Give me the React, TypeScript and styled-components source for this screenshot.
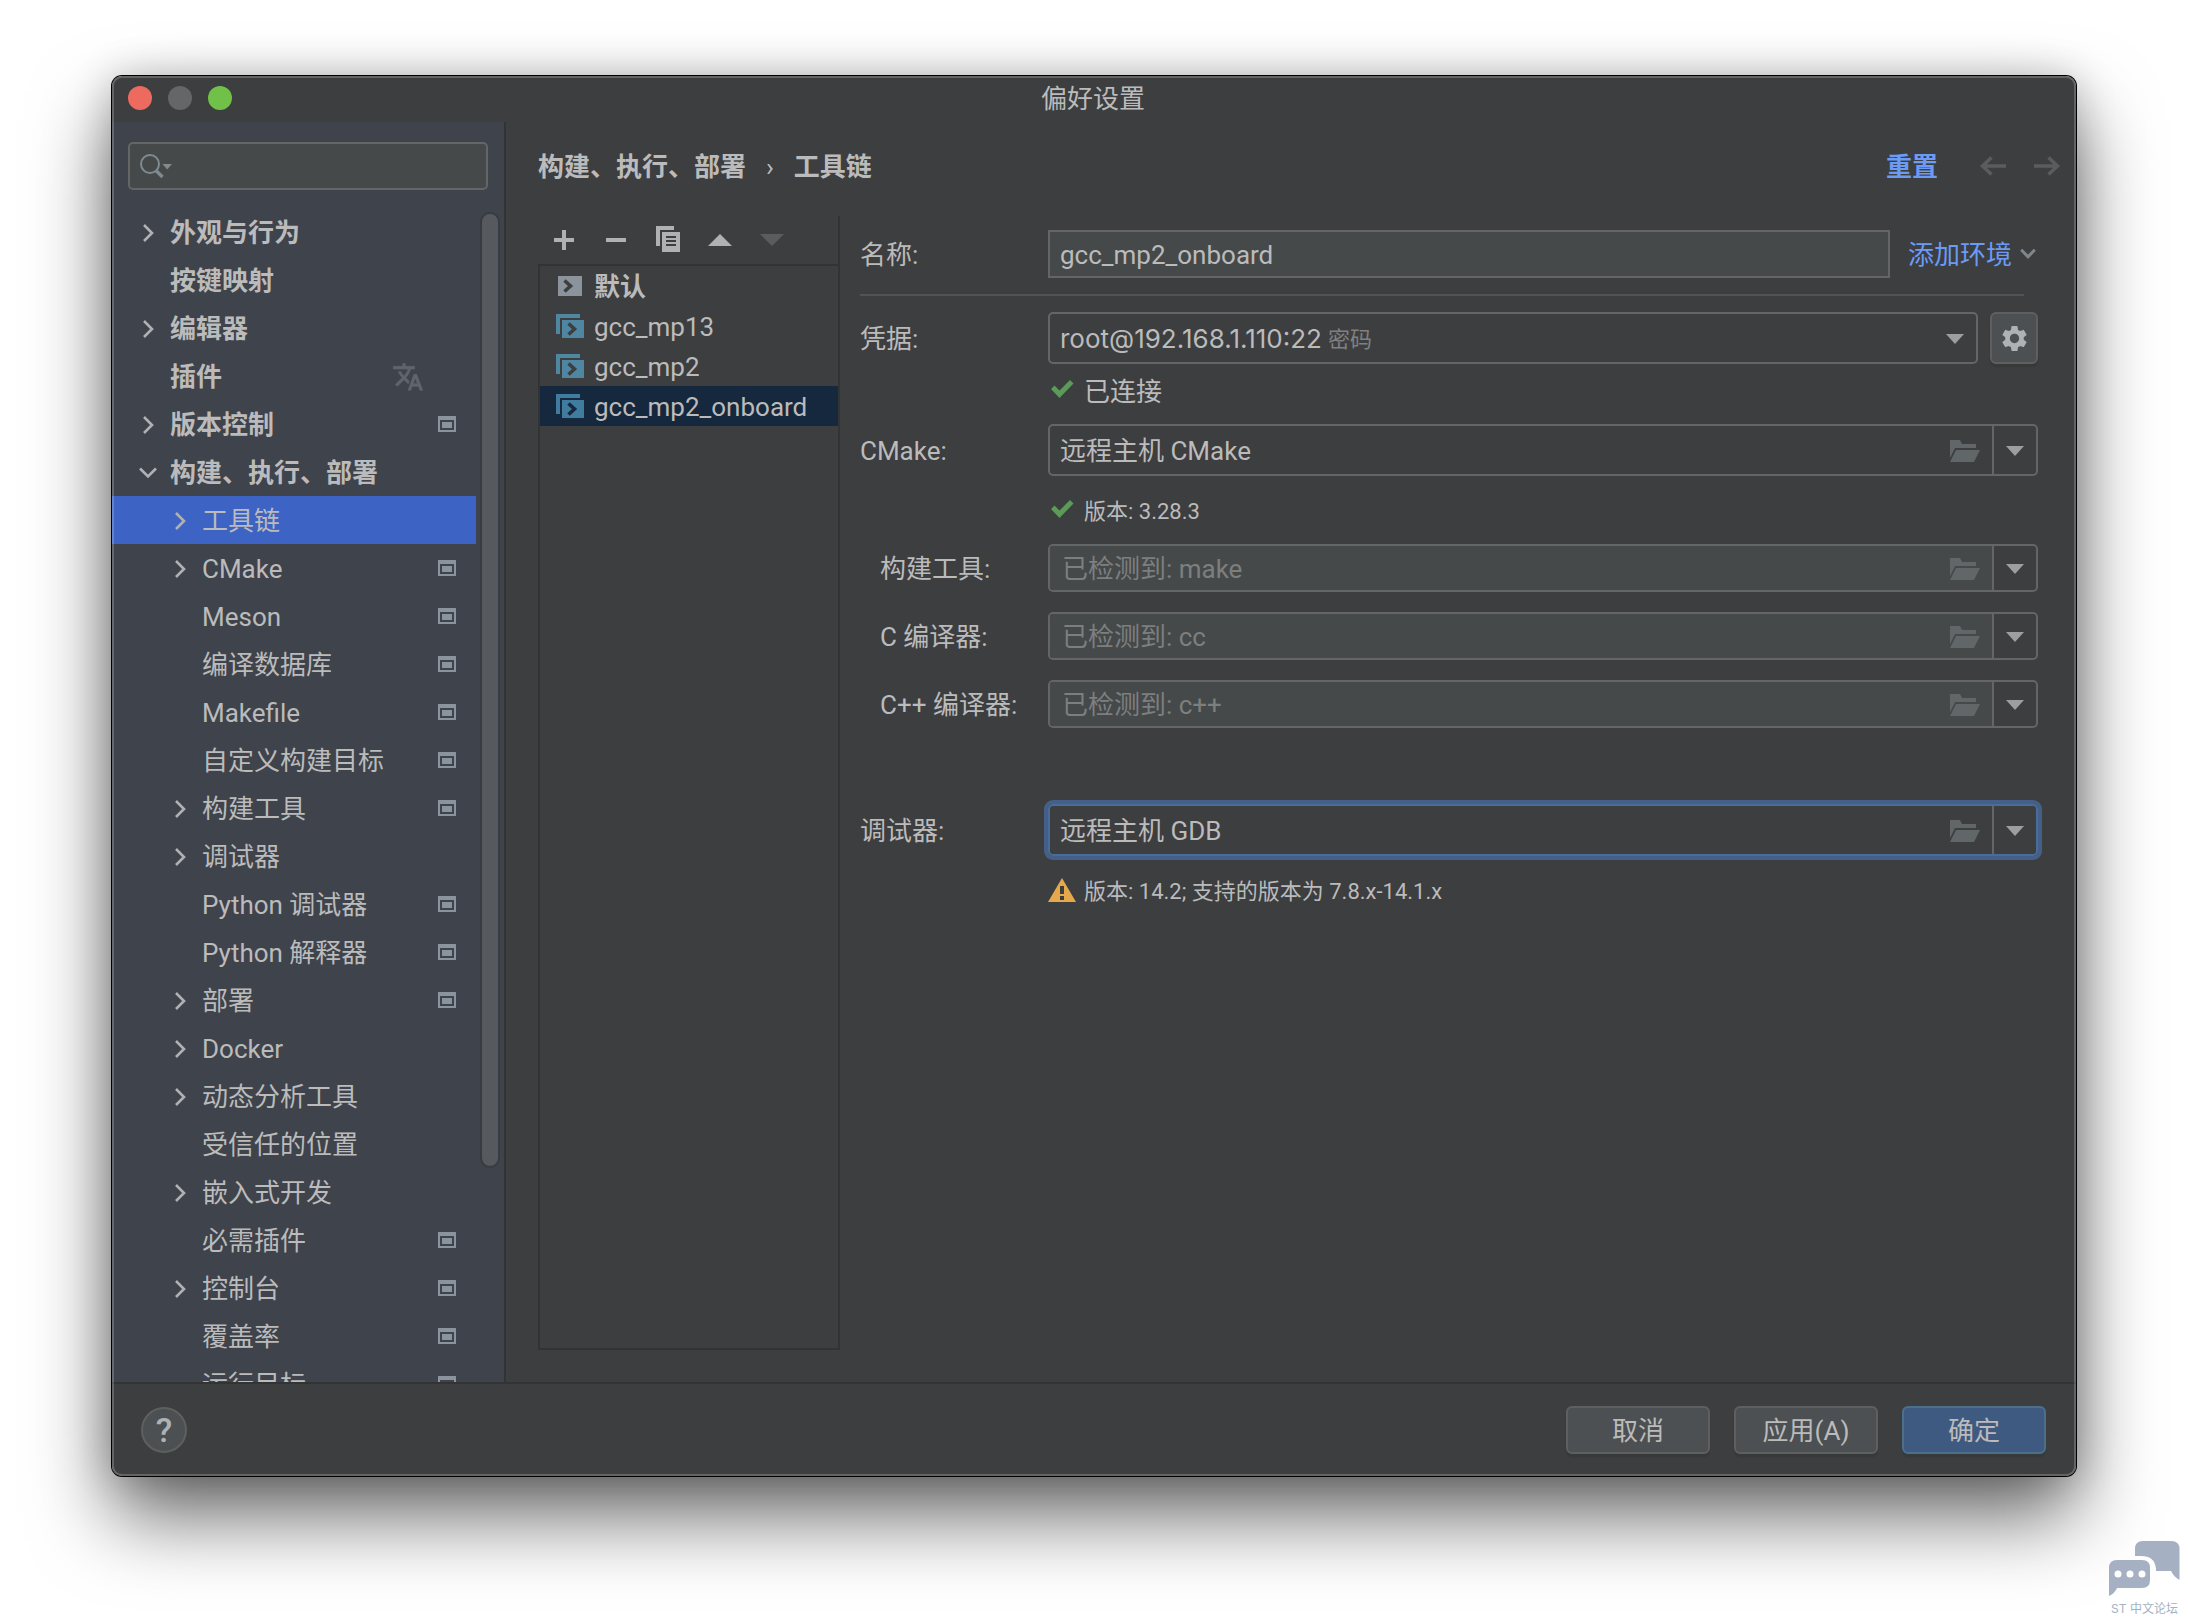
import React, { useState } from "react";
import styled, { createGlobalStyle, css } from "styled-components";
import { MdSettings } from "react-icons/md";

const color = {
  panel: "#3d3e40",
  sidebar: "#3f434c",
  field: "#45494a",
  line: "#323334",
  border: "#646566",
  text: "#bbbbbb",
  dim: "#808080",
  link: "#6b9bf5",
  selected: "#3d63c4",
  listSelected: "#16283d",
  glyph: "#afb1b3",
  disabled: "#5c5c5c",
  muted: "#8b949d",
};

/* Text sits a little below the middle of its row, so that CJK glyphs look centred. */
const textDrop = css`
  padding-top: 2px;
`;

const GlobalStyle = createGlobalStyle`
  *, *::before, *::after { box-sizing: border-box; }
  body { margin: 0; background: #ffffff; }
  body, button, input, select {
    font-family: Roboto, "Noto Sans CJK SC", sans-serif;
    font-size: 26px;
    line-height: 32px;
    color: ${color.text};
  }
  button, input, select {
    margin: 0;
    padding: 0;
    border: 0;
    border-radius: 0;
    background: none;
    outline: none;
    appearance: none;
  }
  svg { display: block; flex: none; }
`;

const Page = styled.div`
  display: flex;
  height: 100vh;
  padding: 76px 112px 148px;
  overflow: hidden;
`;

const Window = styled.div`
  position: relative;
  flex: 1;
  min-width: 0;
  display: flex;
  flex-direction: column;
  overflow: hidden;
  border-radius: 10px;
  background: ${color.panel};
`;

const WindowShadow = styled.div`
  flex: 1;
  min-width: 0;
  display: flex;
  border-radius: 10px;
  box-shadow: 0 0 0 1px #000000, 0 40px 80px rgba(0, 0, 0, 0.6), 0 0 40px rgba(0, 0, 0, 0.2);
`;

const Rim = styled.div`
  position: absolute;
  inset: 0;
  border: 2px solid rgba(255, 255, 255, 0.2);
  border-radius: 10px;
  pointer-events: none;
`;

const TitleBar = styled.header`
  flex: none;
  display: grid;
  grid-template-columns: 1fr auto 1fr;
  align-items: center;
  height: 46px;
  padding: 0 18px 2px 16px;
`;

const TrafficLights = styled.div`
  display: flex;
  gap: 16px;
`;

const Light = styled.button<{ $color: string }>`
  width: 24px;
  height: 24px;
  border-radius: 50%;
  background: ${(p) => p.$color};
`;

const Title = styled.h1`
  margin: 0;
  font-size: 26px;
  font-weight: 400;
  ${textDrop}
`;

const Main = styled.div`
  flex: 1;
  min-height: 0;
  display: flex;
  border-bottom: 2px solid ${color.line};
`;

const Sidebar = styled.aside`
  flex: none;
  display: flex;
  flex-direction: column;
  gap: 18px;
  width: 394px;
  padding-top: 20px;
  border-right: 2px solid ${color.line};
  background: ${color.sidebar};
`;

const SearchBox = styled.label`
  flex: none;
  display: flex;
  align-items: center;
  gap: 8px;
  height: 48px;
  margin: 0 16px;
  padding: 0 10px;
  border: 2px solid ${color.border};
  border-radius: 5px;
  background: ${color.field};

  input {
    flex: 1;
    min-width: 0;
  }
`;

const TreeArea = styled.div`
  flex: 1;
  min-height: 0;
  display: flex;
`;

const Tree = styled.ul`
  flex: 1;
  min-width: 0;
  margin: 0;
  padding: 0;
  overflow: hidden;
  list-style: none;
`;

const TreeRow = styled.button<{ $child: boolean; $selected: boolean }>`
  display: flex;
  align-items: center;
  width: 100%;
  height: 48px;
  padding: 0 20px 0 ${(p) => (p.$child ? 56 : 24)}px;
  font-weight: ${(p) => (p.$child ? 400 : 700)};
  text-align: left;
  background: ${(p) => (p.$selected ? color.selected : "transparent")};
`;

const ChevronSlot = styled.span`
  flex: none;
  display: flex;
  justify-content: center;
  width: 24px;
  margin-right: 10px;
  padding-top: 2px;
`;

const TreeText = styled.span`
  flex: 1;
  min-width: 0;
  white-space: nowrap;
  ${textDrop}
`;

const TranslateSlot = styled.span`
  flex: none;
  padding-top: 2px;
`;

const BadgeSlot = styled.span`
  flex: none;
  width: 18px;
  margin-left: 14px;
`;

const ScrollTrack = styled.div`
  flex: none;
  display: flex;
  flex-direction: column;
  width: 28px;
  padding: 4px;
`;

const ScrollThumb = styled.div`
  height: 82%;
  width: 20px;
  border: 2px solid #383b40;
  border-radius: 10px;
  background: #56595d;
`;

const Content = styled.main`
  flex: 1;
  min-width: 0;
  display: flex;
  flex-direction: column;
`;

const ContentHeader = styled.div`
  flex: none;
  display: flex;
  align-items: center;
  height: 90px;
  padding: 0 16px 2px 32px;
`;

const Breadcrumb = styled.nav`
  flex: 1;
  display: flex;
  gap: 20px;
  font-weight: 700;
  ${textDrop}
`;

const Separator = styled.span`
  font-weight: 400;
`;

const HeaderActions = styled.div`
  display: flex;
  align-items: center;
  gap: 28px;
`;

const ResetLink = styled.a`
  margin-right: 14px;
  font-weight: 700;
  color: ${color.link};
  text-decoration: none;
  ${textDrop}
`;

const Body = styled.div`
  flex: 1;
  min-height: 0;
  display: flex;
  padding: 4px 38px 32px 32px;
`;

const ListPanel = styled.section`
  flex: none;
  display: flex;
  flex-direction: column;
  width: 302px;
  border-right: 2px solid ${color.line};
`;

const Toolbar = styled.div`
  flex: none;
  display: flex;
  height: 48px;
`;

const ToolButton = styled.button`
  display: flex;
  align-items: center;
  justify-content: center;
  width: 52px;
`;

const ToolchainList = styled.ul`
  flex: 1;
  margin: 0;
  padding: 0;
  border: 2px solid ${color.line};
  border-right: 0;
  list-style: none;
`;

const ToolchainRow = styled.button<{ $selected: boolean; $bold: boolean }>`
  display: flex;
  align-items: center;
  gap: 10px;
  width: 100%;
  height: 40px;
  padding-left: 16px;
  font-weight: ${(p) => (p.$bold ? 700 : 400)};
  white-space: nowrap;
  background: ${(p) => (p.$selected ? color.listSelected : "transparent")};
`;

const ToolchainName = styled.span`
  ${textDrop}
`;

const IconSlot = styled.span`
  flex: none;
  display: flex;
  justify-content: center;
  width: 28px;
`;

const Form = styled.form`
  flex: 1;
  min-width: 0;
  display: flex;
  flex-direction: column;
  padding: 14px 0 0 20px;
`;

const FormRow = styled.div`
  display: grid;
  grid-template-columns: 188px 1fr;
  align-items: center;
`;

const FieldLabel = styled.label<{ $indent?: boolean }>`
  padding-left: ${(p) => (p.$indent ? 20 : 0)}px;
  white-space: nowrap;
  ${textDrop}
`;

const FieldLine = styled.div<{ $gap: number }>`
  display: flex;
  gap: ${(p) => p.$gap}px;
`;

const TextInput = styled.input`
  flex: 1;
  min-width: 0;
  height: 48px;
  padding: 2px 10px 0;
  border: 2px solid ${color.border};
  background: ${color.field};
`;

const MenuLink = styled.button`
  display: flex;
  align-items: center;
  gap: 8px;
  padding-right: 2px;
  color: ${color.link};
  white-space: nowrap;

  span {
    ${textDrop}
  }
`;

const Divider = styled.hr`
  width: calc(100% - 14px);
  height: 2px;
  margin: 16px 0;
  border: 0;
  background: #515355;
`;

const Combo = styled.div<{ $editable?: boolean; $focused?: boolean }>`
  flex: 1;
  min-width: 0;
  display: flex;
  align-items: center;
  height: ${(p) => (p.$editable ? 48 : 52)}px;
  border: 2px solid ${color.border};
  border-radius: 5px;
  overflow: hidden;
  ${(p) =>
    p.$focused &&
    css`
      border-color: #4a6c99;
      box-shadow: 0 0 0 4px #456088;
    `}
`;

const ComboValue = styled.div<{ $editable?: boolean }>`
  flex: 1;
  min-width: 0;
  align-self: stretch;
  display: flex;
  align-items: center;
  padding: 2px 12px 0 ${(p) => (p.$editable ? 12 : 10)}px;
  background: ${(p) => (p.$editable ? color.field : "transparent")};
`;

const ComboSelect = styled.select<{ $fit?: boolean }>`
  height: 40px;
  ${(p) =>
    p.$fit
      ? css`
          field-sizing: content;
          font-family: Inter, sans-serif;
        `
      : css`
          flex: 1;
          min-width: 0;
        `}

  option {
    background: ${color.panel};
  }
`;

const ComboInput = styled.input`
  flex: 1;
  min-width: 0;

  &::placeholder {
    color: #7d7f7f;
    opacity: 1;
  }
`;

const CredentialHint = styled.span`
  flex: 1;
  margin-left: 6px;
  font-size: 22px;
  color: ${color.dim};
  ${textDrop}
`;

const IconButton = styled.button`
  display: flex;
  align-items: center;
`;

const ComboArrow = styled.button`
  align-self: stretch;
  display: flex;
  align-items: center;
  justify-content: center;
  width: 44px;
  padding-top: 2px;
  border-left: 2px solid ${color.border};
`;

const GearButton = styled.button`
  display: flex;
  align-items: center;
  justify-content: center;
  width: 48px;
  height: 52px;
  border: 2px solid #5e6060;
  border-radius: 6px;
  background: #4c5052;
  box-shadow: 0 3px 1px #38393a;
  color: ${color.glyph};
`;

const Status = styled.div<{ $top: number; $small?: boolean }>`
  display: flex;
  align-items: center;
  gap: 8px;
  height: 32px;
  margin: ${(p) => p.$top}px 0 16px 188px;
  font-size: ${(p) => (p.$small ? 22 : 26)}px;
`;

const ToolFields = styled.div`
  display: flex;
  flex-direction: column;
  gap: 20px;
  margin-bottom: 76px;
`;

const Footer = styled.footer`
  flex: none;
  display: flex;
  align-items: center;
  justify-content: space-between;
  height: 92px;
  padding: 0 30px 0 29px;
`;

const HelpButton = styled.button`
  width: 46px;
  height: 46px;
  border: 2px solid #5e6060;
  border-radius: 50%;
  background: #4c5052;
  color: ${color.glyph};
  font-size: 34px;
  font-weight: 500;
`;

const DialogButtons = styled.div`
  display: flex;
  gap: 24px;
`;

const DialogButton = styled.button<{ $primary?: boolean }>`
  width: 144px;
  height: 48px;
  border: 2px solid ${(p) => (p.$primary ? "#4c708c" : "#5e6060")};
  border-radius: 6px;
  background: ${(p) => (p.$primary ? "#3f5a80" : "#4c5052")};
  box-shadow: 0 3px 1px #38393a;
  ${textDrop}
`;

const Watermark = styled.div`
  position: absolute;
  right: 8px;
  bottom: 5px;
  display: flex;
  flex-direction: column;
  align-items: center;
  gap: 3px;
  font-family: Inter, "Noto Sans CJK SC", sans-serif;
  font-size: 12px;
  line-height: 20px;
  color: #a5b1c2;
  white-space: nowrap;
`;

const ChevronRight = () => (
  <svg width="12" height="20" viewBox="0 0 12 20" fill="none" stroke={color.glyph} strokeWidth="2.6">
    <path d="M2 2 10 10 2 18" />
  </svg>
);

const ChevronDown = () => (
  <svg width="20" height="12" viewBox="0 0 20 12" fill="none" stroke={color.glyph} strokeWidth="2.6">
    <path d="M2 1.5 10 9.5 18 1.5" />
  </svg>
);

const LinkChevron = () => (
  <svg width="16" height="12" viewBox="0 0 16 12" fill="none" stroke="#7f868c" strokeWidth="3">
    <path d="M1.2 1.8 8 8.8 14.8 1.8" />
  </svg>
);

const SearchIcon = () => (
  <svg width="34" height="26" viewBox="0 0 34 26" fill="none">
    <circle cx="10" cy="11" r="9" stroke="#7f8b91" strokeWidth="2" />
    <path d="M16 17.5 22.5 24" stroke="#7f8b91" strokeWidth="3.4" />
    <path d="M22.5 11H32L27.2 16.5Z" fill="#7f8b91" />
  </svg>
);

const TranslateIcon = () => (
  <svg width="32" height="32" viewBox="0 0 24 24" fill="#5f646d" stroke="#5f646d" strokeWidth="0.5">
    <path d="m12.870 15.070-2.540-2.510.030-.030A17.520 17.520 0 0 0 14.070 6H17V4h-7V2H8v2H1v1.990h11.170C11.500 7.920 10.440 9.750 9 11.350 8.070 10.320 7.300 9.190 6.690 8h-2c.730 1.630 1.730 3.170 2.980 4.560l-5.090 5.020L4 19l5-5 3.110 3.110.760-2.040zM18.500 10h-2L12 22h2l1.120-3h4.750L21 22h2l-4.500-12zm-2.620 7 1.620-4.330L19.120 17h-3.240z" />
  </svg>
);

const ProjectBadge = () => (
  <svg width="18" height="16" viewBox="0 0 18 16" fill={color.muted}>
    <path fillRule="evenodd" d="M0 0H18V16H0ZM2 4V14H16V4Z" />
    <path d="M4 6H14V12H4Z" />
  </svg>
);

const Triangle = ({ up, fill }: { up?: boolean; fill: string }) => (
  <svg width="24" height="12" viewBox="0 0 24 12" fill={fill}>
    <path d={up ? "M0 12H24L12 0Z" : "M0 0H24L12 12Z"} />
  </svg>
);

const ComboTriangle = () => (
  <svg width="18" height="10" viewBox="0 0 18 10" fill="#9c9ea1">
    <path d="M0 0H18L9 10Z" />
  </svg>
);

const PlusIcon = () => (
  <svg width="20" height="20" viewBox="0 0 20 20" fill={color.glyph}>
    <path d="M8 0H12V8H20V12H12V20H8V12H0V8H8Z" />
  </svg>
);

const MinusIcon = () => (
  <svg width="20" height="20" viewBox="0 0 20 20" fill={color.glyph}>
    <path d="M0 8H20V12H0Z" />
  </svg>
);

const CopyIcon = () => (
  <svg width="24" height="28" viewBox="0 0 24 28" fill={color.glyph}>
    <path d="M0 0H18V4H4V20H0Z" />
    <path fillRule="evenodd" d="M6 6H24V26H6ZM10 10V12H20V10ZM10 14V16H20V14ZM10 18V20H20V18Z" />
  </svg>
);

const NavArrow = ({ forward }: { forward?: boolean }) => (
  <svg width="26" height="20" viewBox="0 0 26 20" fill="none" stroke={color.disabled} strokeWidth="3.6">
    <path d={forward ? "M0 10H23M14.5 1.5 23.5 10 14.5 18.5" : "M26 10H3M11.5 1.5 2.5 10 11.5 18.5"} />
  </svg>
);

const LocalIcon = () => (
  <svg width="24" height="20" viewBox="0 0 24 20">
    <path d="M0 0H24V20H0Z" fill="#8b949d" />
    <path d="M6.5 4.5 12.5 10 6.5 15.5" fill="none" stroke={color.panel} strokeWidth="3.6" />
  </svg>
);

const RemoteIcon = ({ selected }: { selected: boolean }) => (
  <svg width="28" height="24" viewBox="0 0 28 24">
    <path d="M0 0H24V4H4V20H0ZM6 6H28V24H6Z" fill={selected ? "#407ba0" : "#4f87a3"} />
    <path
      d="M12.5 9.5 18.5 15 12.5 20.5"
      fill="none"
      stroke={selected ? color.listSelected : color.panel}
      strokeWidth="3.6"
    />
  </svg>
);

const FolderIcon = () => (
  <svg width="30" height="22" viewBox="0 0 30 22" fill="#616669">
    <path d="M0 0H10L12 4H26V8H5L0 18Z" />
    <path d="M6 10H30L24 22H0Z" />
  </svg>
);

const CheckIcon = () => (
  <svg width="24" height="24" viewBox="0 0 24 24" fill="#5b9a58">
    <path d="M1 9 4.500 5.500 9.500 10.500 20 0 23.500 3.500 9.500 18Z" />
  </svg>
);

const WarningIcon = () => (
  <svg width="28" height="28" viewBox="0 0 28 28">
    <path d="M14 0 28 24H0Z" fill="#e5a84b" />
    <path d="M12 8H16V16H12ZM12 18H16V22H12Z" fill={color.panel} />
  </svg>
);

const ForumLogo = () => (
  <svg width="71" height="55" viewBox="0 0 71 55" fill="#a5b1c2">
    <path d="M26 15V8Q26 0 34 0H62Q70.500 0 70.500 8V39Q65 36 62 30H47V28Q46 15 32 15Z" />
    <path
      fillRule="evenodd"
      d="M8 19H33Q41 19 41 27V39Q41 47 33 47H8Q6 52 0 55V27Q0 19 8 19ZM9 29.500A3.500 3.500 0 1 0 9 36.500A3.500 3.500 0 1 0 9 29.500ZM21 29.500A3.500 3.500 0 1 0 21 36.500A3.500 3.500 0 1 0 21 29.500ZM33 29.500A3.500 3.500 0 1 0 33 36.500A3.500 3.500 0 1 0 33 29.500Z"
    />
  </svg>
);

type TreeItem = { text: string; child?: boolean; arrow?: "right" | "down"; badge?: boolean; translate?: boolean };

const treeItems: TreeItem[] = [
  { text: "外观与行为", arrow: "right" },
  { text: "按键映射" },
  { text: "编辑器", arrow: "right" },
  { text: "插件", translate: true },
  { text: "版本控制", arrow: "right", badge: true },
  { text: "构建、执行、部署", arrow: "down" },
  { text: "工具链", child: true, arrow: "right" },
  { text: "CMake", child: true, arrow: "right", badge: true },
  { text: "Meson", child: true, badge: true },
  { text: "编译数据库", child: true, badge: true },
  { text: "Makefile", child: true, badge: true },
  { text: "自定义构建目标", child: true, badge: true },
  { text: "构建工具", child: true, arrow: "right", badge: true },
  { text: "调试器", child: true, arrow: "right" },
  { text: "Python 调试器", child: true, badge: true },
  { text: "Python 解释器", child: true, badge: true },
  { text: "部署", child: true, arrow: "right", badge: true },
  { text: "Docker", child: true, arrow: "right" },
  { text: "动态分析工具", child: true, arrow: "right" },
  { text: "受信任的位置", child: true },
  { text: "嵌入式开发", child: true, arrow: "right" },
  { text: "必需插件", child: true, badge: true },
  { text: "控制台", child: true, arrow: "right", badge: true },
  { text: "覆盖率", child: true, badge: true },
  { text: "运行目标", child: true, badge: true },
];

const toolchains = ["默认", "gcc_mp13", "gcc_mp2", "gcc_mp2_onboard"];

const detectedTools = [
  { id: "make", label: "构建工具:", placeholder: "已检测到: make" },
  { id: "cc", label: "C 编译器:", placeholder: "已检测到: cc" },
  { id: "cxx", label: "C++ 编译器:", placeholder: "已检测到: c++" },
];

type PathComboProps = { id: string; value?: string; placeholder?: string; focused?: boolean };

const PathCombo = ({ id, value, placeholder, focused }: PathComboProps) => {
  const editable = placeholder !== undefined;
  return (
    <Combo $editable={editable} $focused={focused}>
      <ComboValue $editable={editable}>
        {editable ? (
          <ComboInput id={id} placeholder={placeholder} />
        ) : (
          <ComboSelect id={id}>
            <option>{value}</option>
          </ComboSelect>
        )}
        <IconButton type="button" aria-label="浏览">
          <FolderIcon />
        </IconButton>
      </ComboValue>
      <ComboArrow type="button" aria-label="展开">
        <ComboTriangle />
      </ComboArrow>
    </Combo>
  );
};

export default function App() {
  const [section, setSection] = useState("工具链");
  const [toolchain, setToolchain] = useState("gcc_mp2_onboard");

  return (
    <>
      <GlobalStyle />
      <Page>
        <WindowShadow>
          <Window>
            <TitleBar>
              <TrafficLights>
                <Light $color="#ed6a5e" aria-label="关闭" />
                <Light $color="#656668" aria-label="最小化" />
                <Light $color="#71c048" aria-label="缩放" />
              </TrafficLights>
              <Title>偏好设置</Title>
            </TitleBar>

            <Main>
              <Sidebar>
                <SearchBox>
                  <SearchIcon />
                  <input type="search" aria-label="搜索" />
                </SearchBox>
                <TreeArea>
                  <Tree>
                    {treeItems.map((item) => (
                      <li key={item.text}>
                        <TreeRow
                          $child={!!item.child}
                          $selected={item.text === section}
                          onClick={() => setSection(item.text)}
                        >
                          <ChevronSlot>
                            {item.arrow === "right" && <ChevronRight />}
                            {item.arrow === "down" && <ChevronDown />}
                          </ChevronSlot>
                          <TreeText>{item.text}</TreeText>
                          {item.translate && (
                            <TranslateSlot>
                              <TranslateIcon />
                            </TranslateSlot>
                          )}
                          <BadgeSlot>{item.badge && <ProjectBadge />}</BadgeSlot>
                        </TreeRow>
                      </li>
                    ))}
                  </Tree>
                  <ScrollTrack>
                    <ScrollThumb />
                  </ScrollTrack>
                </TreeArea>
              </Sidebar>

              <Content>
                <ContentHeader>
                  <Breadcrumb>
                    <span>构建、执行、部署</span>
                    <Separator>›</Separator>
                    <span>工具链</span>
                  </Breadcrumb>
                  <HeaderActions>
                    <ResetLink href="#reset">重置</ResetLink>
                    <IconButton aria-label="后退">
                      <NavArrow />
                    </IconButton>
                    <IconButton aria-label="前进">
                      <NavArrow forward />
                    </IconButton>
                  </HeaderActions>
                </ContentHeader>

                <Body>
                  <ListPanel>
                    <Toolbar>
                      <ToolButton aria-label="添加">
                        <PlusIcon />
                      </ToolButton>
                      <ToolButton aria-label="移除">
                        <MinusIcon />
                      </ToolButton>
                      <ToolButton aria-label="复制">
                        <CopyIcon />
                      </ToolButton>
                      <ToolButton aria-label="上移">
                        <Triangle up fill={color.glyph} />
                      </ToolButton>
                      <ToolButton aria-label="下移">
                        <Triangle fill={color.disabled} />
                      </ToolButton>
                    </Toolbar>
                    <ToolchainList>
                      {toolchains.map((name, index) => (
                        <li key={name}>
                          <ToolchainRow
                            $selected={name === toolchain}
                            $bold={index === 0}
                            onClick={() => setToolchain(name)}
                          >
                            <IconSlot>
                              {index === 0 ? <LocalIcon /> : <RemoteIcon selected={name === toolchain} />}
                            </IconSlot>
                            <ToolchainName>{name}</ToolchainName>
                          </ToolchainRow>
                        </li>
                      ))}
                    </ToolchainList>
                  </ListPanel>

                  <Form>
                    <FormRow>
                      <FieldLabel htmlFor="name">名称:</FieldLabel>
                      <FieldLine $gap={18}>
                        <TextInput id="name" defaultValue="gcc_mp2_onboard" />
                        <MenuLink type="button">
                          <span>添加环境</span>
                          <LinkChevron />
                        </MenuLink>
                      </FieldLine>
                    </FormRow>
                    <Divider />
                    <FormRow>
                      <FieldLabel htmlFor="credentials">凭据:</FieldLabel>
                      <FieldLine $gap={12}>
                        <Combo>
                          <ComboValue>
                            <ComboSelect id="credentials" $fit>
                              <option>root@192.168.1.110:22</option>
                            </ComboSelect>
                            <CredentialHint>密码</CredentialHint>
                            <ComboTriangle />
                          </ComboValue>
                        </Combo>
                        <GearButton type="button" aria-label="设置">
                          <MdSettings size={31} />
                        </GearButton>
                      </FieldLine>
                    </FormRow>
                    <Status $top={12}>
                      <IconSlot>
                        <CheckIcon />
                      </IconSlot>
                      已连接
                    </Status>
                    <FormRow>
                      <FieldLabel htmlFor="cmake">CMake:</FieldLabel>
                      <PathCombo id="cmake" value="远程主机 CMake" />
                    </FormRow>
                    <Status $top={20} $small>
                      <IconSlot>
                        <CheckIcon />
                      </IconSlot>
                      版本: 3.28.3
                    </Status>
                    <ToolFields>
                      {detectedTools.map((tool) => (
                        <FormRow key={tool.id}>
                          <FieldLabel htmlFor={tool.id} $indent>
                            {tool.label}
                          </FieldLabel>
                          <PathCombo id={tool.id} placeholder={tool.placeholder} />
                        </FormRow>
                      ))}
                    </ToolFields>
                    <FormRow>
                      <FieldLabel htmlFor="debugger">调试器:</FieldLabel>
                      <PathCombo id="debugger" value="远程主机 GDB" focused />
                    </FormRow>
                    <Status $top={20} $small>
                      <IconSlot>
                        <WarningIcon />
                      </IconSlot>
                      版本: 14.2; 支持的版本为 7.8.x-14.1.x
                    </Status>
                  </Form>
                </Body>
              </Content>
            </Main>

            <Footer>
              <HelpButton aria-label="帮助">?</HelpButton>
              <DialogButtons>
                <DialogButton>取消</DialogButton>
                <DialogButton>应用(A)</DialogButton>
                <DialogButton $primary>确定</DialogButton>
              </DialogButtons>
            </Footer>
            <Rim />
          </Window>
        </WindowShadow>
        <Watermark>
          <ForumLogo />
          <span>ST 中文论坛</span>
        </Watermark>
      </Page>
    </>
  );
}
